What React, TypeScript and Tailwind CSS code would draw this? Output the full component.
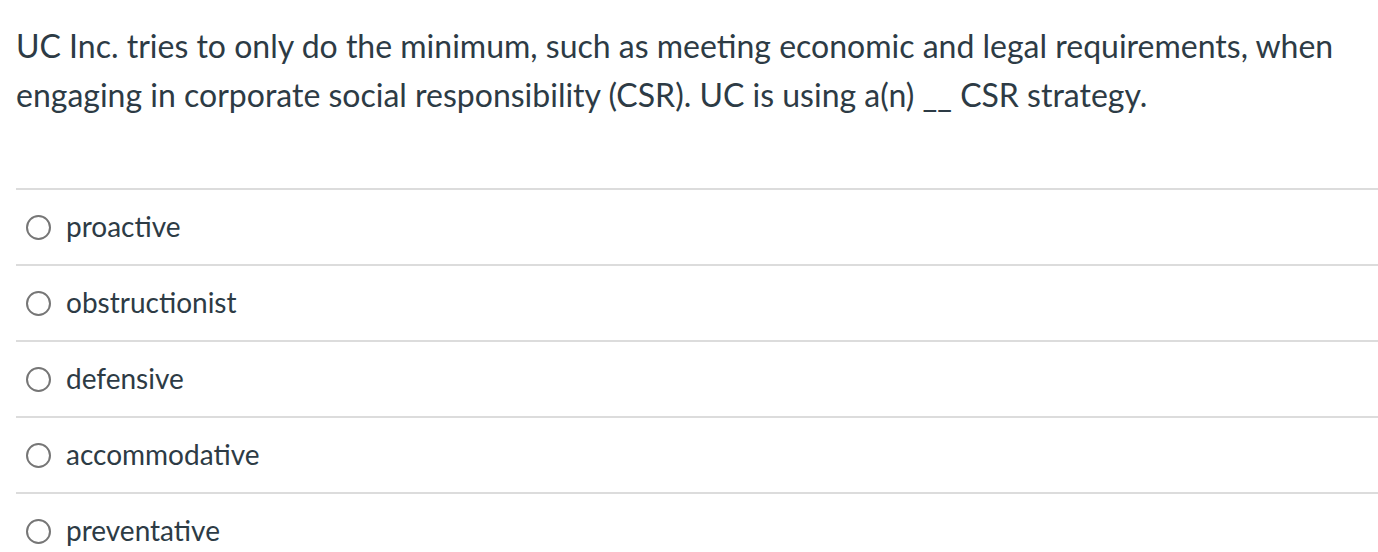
import * as React from "react";

const options = [
  "proactive",
  "obstructionist",
  "defensive",
  "accommodative",
  "preventative",
];

export default function App() {
  return (
    <div className="min-h-screen bg-white font-['Lato',sans-serif] text-[#2d3b45]">
      <div className="px-4 pt-[21px]">
        <p className="text-[32px] leading-[49px]">
          UC Inc. tries to only do the minimum, such as meeting economic and legal requirements, when
          engaging in corporate social responsibility (CSR). UC is using a(n) __ CSR strategy.
        </p>
      </div>
      <div className="ml-4 mt-[69px]">
        {options.map((o) => (
          <label
            key={o}
            className="flex h-[76px] items-center border-t-2 border-[#dcdcdc] pl-[10px]"
          >
            <span className="h-[25px] w-[25px] rounded-full border-2 border-[#767676] bg-white" />
            <span className="ml-[15px] pb-[3px] text-[28px] leading-none">{o}</span>
          </label>
        ))}
      </div>
    </div>
  );
}
